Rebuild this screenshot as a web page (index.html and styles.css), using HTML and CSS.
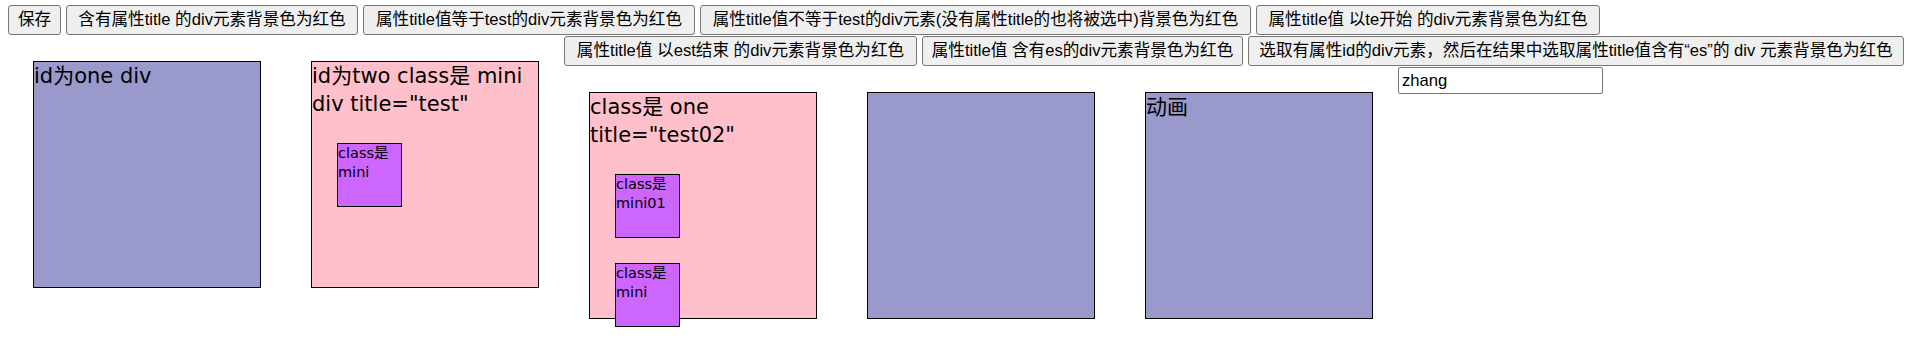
FILE: index.html
```html
<!DOCTYPE html>
<html lang="zh-CN">
<head>
<meta charset="utf-8">
<title>jQuery 属性选择器</title>
<link rel="stylesheet" href="styles.css">
</head>
<body>
<div class="page">
  <div class="toolbar row-top">
    <button class="btn w-save">保存</button>
    <button class="btn w-b1">含有属性title 的div元素背景色为红色</button>
    <button class="btn w-b2">属性title值等于test的div元素背景色为红色</button>
    <button class="btn w-b3">属性title值不等于test的div元素(没有属性title的也将被选中)背景色为红色</button>
    <button class="btn w-b4">属性title值 以te开始 的div元素背景色为红色</button>
  </div>
  <div class="stage">
    <div class="left-group">
      <div class="box lavender"><div class="label">id为one div</div></div>
      <div class="box pink">
        <div class="label">id为two class是 mini div title="test"</div>
        <div class="mini">class是 mini</div>
      </div>
    </div>
    <div class="right-group">
      <div class="toolbar row-second">
        <button class="btn w-b5">属性title值 以est结束 的div元素背景色为红色</button>
        <button class="btn w-b6">属性title值 含有es的div元素背景色为红色</button>
        <button class="btn w-b7">选取有属性id的div元素，然后在结果中选取属性title值含有“es”的 div 元素背景色为红色</button>
      </div>
      <div class="box-row">
        <div class="box pink">
          <div class="label">class是 one title="test02"</div>
          <div class="mini">class是 mini01</div>
          <div class="mini">class是 mini</div>
        </div>
        <div class="box lavender"></div>
        <div class="box lavender"><div class="label">动画</div></div>
        <input class="field" type="text" value="zhang">
      </div>
    </div>
  </div>
</div>
</body>
</html>
```

FILE: styles.css
```css
html, body {
  margin: 0;
  padding: 0;
  background: #ffffff;
}

.page {
  padding: 5px 0 0 8px;
  font-family: "DejaVu Sans", "Noto Sans CJK SC", sans-serif;
  color: #000;
}

.toolbar {
  display: flex;
  gap: 5px;
  height: 30px;
}

.row-top {
  margin-bottom: 1px;
}

.btn {
  box-sizing: border-box;
  height: 30px;
  padding: 0 4px;
  margin: 0;
  border: 1px solid #767676;
  border-radius: 3px;
  background: #efefef;
  color: #000;
  font-family: "Liberation Sans", "Noto Sans CJK SC", sans-serif;
  font-size: 16.6px;
  line-height: 20px;
  text-align: center;
  white-space: nowrap;
  overflow: hidden;
}

.w-save { width: 53px; }
.w-b1 { width: 292px; }
.w-b2 { width: 332px; }
.w-b3 { width: 551px; }
.w-b4 { width: 344px; }
.w-b5 { width: 353px; }
.w-b6 { width: 321px; }
.w-b7 { width: 656px; }

.stage {
  display: flex;
  align-items: flex-start;
}

.left-group {
  display: flex;
  align-items: flex-start;
}

.right-group {
  display: flex;
  flex-direction: column;
}

.box-row {
  display: flex;
  align-items: flex-start;
  margin-top: 1px;
}

.box {
  width: 226px;
  height: 225px;
  margin: 25px;
  border: 1px solid #000;
  flex: none;
  font-size: 21px;
  line-height: 28px;
}

.lavender { background: #9999cc; }
.pink { background: #ffc0cb; }

.label {
  word-wrap: break-word;
}

.mini {
  width: 63px;
  height: 62px;
  margin: 25px 0 0 25px;
  border: 1px solid #000;
  background: #cc66ff;
  font-size: 14.5px;
  line-height: 18.5px;
}

.field {
  box-sizing: border-box;
  width: 205px;
  height: 27px;
  margin: 0;
  padding: 1px 3px;
  border: 1px solid #767676;
  border-radius: 2px;
  background: #fff;
  color: #000;
  font-family: "Liberation Sans", "Noto Sans CJK SC", sans-serif;
  font-size: 16.6px;
  flex: none;
}
```
